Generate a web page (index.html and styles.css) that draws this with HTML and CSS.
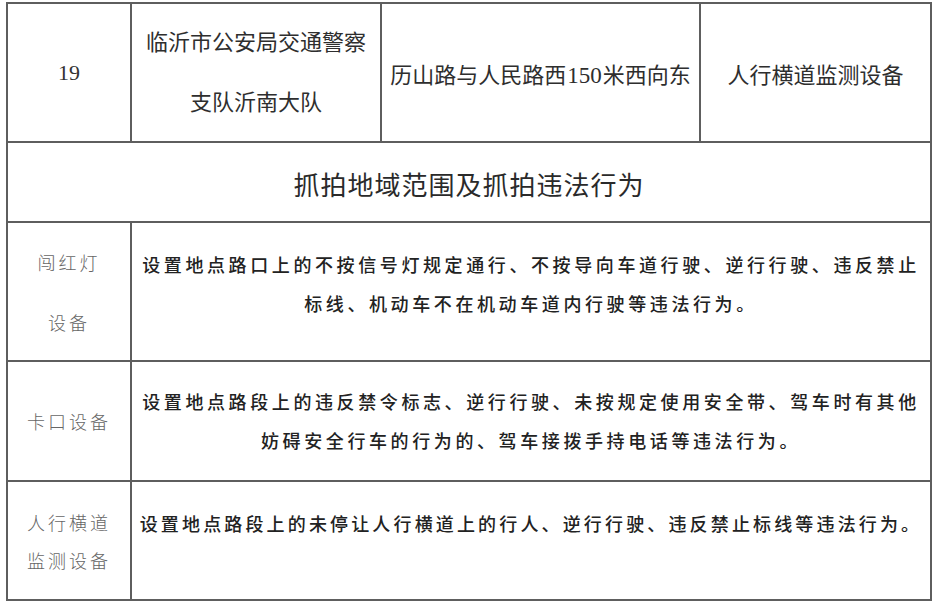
FILE: index.html
```html
<!DOCTYPE html>
<html lang="zh-CN">
<head>
<meta charset="utf-8">
<title>抓拍地域范围及抓拍违法行为</title>
<link rel="stylesheet" href="styles.css">
</head>
<body>
<table class="grid">
  <colgroup>
    <col class="c1"><col class="c2"><col class="c3"><col class="c4">
  </colgroup>
  <tr class="r-top">
    <td class="num">19</td>
    <td class="unit">临沂市公安局交通警察<br>支队沂南大队</td>
    <td class="place">历山路与人民路西<span class="latin">150</span>米西向东</td>
    <td class="type">人行横道监测设备</td>
  </tr>
  <tr class="r-head">
    <td class="head" colspan="4">抓拍地域范围及抓拍违法行为</td>
  </tr>
  <tr class="r-red">
    <td class="label label-tall">闯红灯<br>设备</td>
    <td class="desc desc-red" colspan="3">设置地点路口上的不按信号灯规定通行、不按导向车道行驶、逆行行驶、违反禁止<br>标线、机动车不在机动车道内行驶等违法行为。</td>
  </tr>
  <tr class="r-gate">
    <td class="label">卡口设备</td>
    <td class="desc" colspan="3">设置地点路段上的违反禁令标志、逆行行驶、未按规定使用安全带、驾车时有其他<br>妨碍安全行车的行为的、驾车接拨手持电话等违法行为。</td>
  </tr>
  <tr class="r-walk">
    <td class="label label-two">人行横道<br>监测设备</td>
    <td class="desc desc-walk" colspan="3">设置地点路段上的未停让人行横道上的行人、逆行行驶、违反禁止标线等违法行为。</td>
  </tr>
</table>
</body>
</html>
```
FILE: styles.css
```css
html, body {
  margin: 0;
  padding: 0;
  background: #ffffff;
}

body {
  font-family: "Noto Sans CJK SC", "Noto Sans", sans-serif;
  color: #2a2a2a;
}

.grid {
  margin: 2px 0 0 6px;
  border-collapse: collapse;
  table-layout: fixed;
  width: 924px;
}

.c1 { width: 124px; }
.c2 { width: 250px; }
.c3 { width: 319px; }
.c4 { width: 231px; }

.grid td {
  border: 2px solid #5e5e5e;
  padding: 0;
  text-align: center;
  vertical-align: middle;
}

.r-top { height: 139px; }
.r-head { height: 80px; }
.r-red { height: 139px; }
.r-gate { height: 120px; }
.r-walk { height: 119px; }

.num {
  font-family: "Liberation Serif", "Times New Roman", serif;
  font-size: 22px;
  color: #333;
}

.unit {
  font-size: 22px;
  line-height: 60px;
  color: #2e2e2e;
  padding-bottom: 6px !important;
}

.place,
.type {
  font-size: 22px;
  color: #2e2e2e;
}

.latin {
  font-family: "Liberation Serif", "Times New Roman", serif;
  font-size: 23px;
  margin: 0 1px;
}

.head {
  font-size: 26px;
  letter-spacing: 1px;
  color: #2a2a2a;
  padding-top: 2px !important;
}

.label {
  font-size: 18px;
  font-weight: 300;
  letter-spacing: 3px;
  color: #666;
  line-height: 38px;
}

.label-tall {
  line-height: 60px;
}

.desc {
  font-size: 18px;
  font-weight: 500;
  letter-spacing: 3.6px;
  line-height: 39px;
  color: #222;
}

.desc-red {
  padding-bottom: 16px !important;
}

.desc-walk {
  letter-spacing: 3.15px;
  padding-bottom: 34px !important;
}
```
